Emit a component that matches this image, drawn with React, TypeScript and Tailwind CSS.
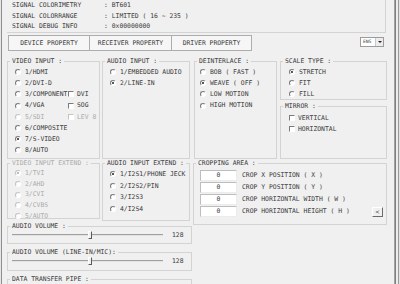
import React from "react";

type Item = { label: string; checked?: boolean; disabled?: boolean };

function Radio({ label, checked, disabled }: Item) {
  return (
    <span className="flex items-center gap-[4px]">
      <span
        className={`flex h-[6px] w-[6px] shrink-0 items-center justify-center rounded-full border border-b-white border-r-white bg-white ${
          disabled ? "border-[#c4c4c4]" : "border-[#7a7a7a]"
        }`}
      >
        {checked && <span className={`h-[2px] w-[2px] rounded-full ${disabled ? "bg-[#a8a8a8]" : "bg-[#1e1e1e]"}`} />}
      </span>
      <span className={disabled ? "text-[#ababab]" : ""}>{label}</span>
    </span>
  );
}

function Check({ label, disabled }: Item) {
  return (
    <span className="flex items-center gap-[3px]">
      <span
        className={`h-[6px] w-[6px] shrink-0 border border-b-white border-r-white bg-white ${
          disabled ? "border-[#c4c4c4]" : "border-[#7a7a7a]"
        }`}
      />
      <span className={disabled ? "text-[#ababab]" : ""}>{label}</span>
    </span>
  );
}

function Group({
  title,
  className = "",
  inner = "",
  disabled,
  children,
}: {
  title: string;
  className?: string;
  inner?: string;
  disabled?: boolean;
  children?: React.ReactNode;
}) {
  return (
    <fieldset className={`min-w-0 shrink-0 border border-[#d3d3d3] ${className}`}>
      <legend className={`ml-[2px] px-[2px] leading-[8px] whitespace-nowrap ${disabled ? "text-[#ababab]" : ""}`}>
        {title}
      </legend>
      <div className={inner}>{children}</div>
    </fieldset>
  );
}

function Slider({ value }: { value: number }) {
  return (
    <div className="flex h-[10px] items-center">
      <div className="relative ml-[4px] h-[2px] w-[151px] border-t border-[#a0a0a0] border-b-white bg-[#e2e2e2]">
        <div className="absolute left-[76px] top-[-4px] h-[8px] w-[4px] border border-white border-b-[#5a5a5a] border-r-[#5a5a5a] bg-[#f0f0f0]" />
      </div>
      <span className="ml-[9px]">{value}</span>
    </div>
  );
}

const signals = [
  ["SIGNAL COLORIMETRY", ": BT601"],
  ["SIGNAL COLORRANGE", ": LIMITED ( 16 ~ 235 )"],
  ["SIGNAL DEBUG INFO", ": 0x00000000"],
];

const tabs = [
  { label: "DEVICE PROPERTY", w: "w-[82px]" },
  { label: "RECEIVER PROPERTY", w: "w-[83px]" },
  { label: "DRIVER PROPERTY", w: "w-[81px]" },
];

const videoInputs: (Item & { extra?: Item })[] = [
  { label: "1/HDMI" },
  { label: "2/DVI-D" },
  { label: "3/COMPONENT", extra: { label: "DVI" } },
  { label: "4/VGA", extra: { label: "SOG" } },
  { label: "5/SDI", disabled: true, extra: { label: "LEV 8", disabled: true } },
  { label: "6/COMPOSITE" },
  { label: "7/S-VIDEO", checked: true },
  { label: "8/AUTO" },
];

const crops = [
  "CROP X POSITION ( X )",
  "CROP Y POSITION ( Y )",
  "CROP HORIZONTAL WIDTH ( W )",
  "CROP HORIZONTAL HEIGHT ( H )",
];

export default function App() {
  return (
    <div className="flex h-[284px] w-[400px] overflow-hidden bg-[#f0f0f0] font-['DejaVu_Sans_Mono',monospace] text-[6.4px] leading-none text-[#3a3a3a]">
      <div className="w-[1px] bg-[#e6e6e6]" />
      <div className="w-[1px] bg-[#8e8e8e]" />
      <div className="w-[5px]" />

      <div className="flex w-[380px] shrink-0 flex-col">
        {/* signal info */}
        <div className="h-[33px] w-[379px] shrink-0 border-b border-r border-[#d3d3d3] pl-[5px]">
          {signals.map(([k, v]) => (
            <div key={k} className="flex h-[10.5px] items-center">
              <span className="w-[92px]">{k}</span>
              <span>{v}</span>
            </div>
          ))}
        </div>

        {/* tabs */}
        <div className="mt-[2px] flex h-[16px] shrink-0 items-start pl-[1px]">
          {tabs.map((t, i) => (
            <div
              key={t.label}
              className={`flex h-[16px] ${t.w} items-center justify-center border border-[#adadad] bg-[#f6f6f6] ${i > 0 ? "-ml-[1px]" : ""}`}
            >
              {t.label}
            </div>
          ))}
          <div className="ml-auto mr-[3px] mt-[2px] flex h-[10px] w-[24px] border border-[#9c9c9c] bg-white">
            <span className="flex flex-1 items-center pl-[2px] text-[4.6px]">ENG</span>
            <span className="flex w-[8px] items-center justify-center border-l border-[#c8c8c8] bg-[#ececec]">
              <span className="h-0 w-0 border-x-[2px] border-t-[2px] border-x-transparent border-t-[#222]" />
            </span>
          </div>
        </div>

        {/* row 1 */}
        <div className="mt-[6px] flex h-[102px] shrink-0">
          <Group title="VIDEO INPUT :" className="h-[102px] w-[93px]" inner="pl-[7px] pt-[1.4px]">
            {videoInputs.map((v) => (
              <div key={v.label} className="flex h-[11.2px] items-center">
                <span className="w-[53px] shrink-0">
                  <Radio {...v} />
                </span>
                {v.extra && <Check {...v.extra} />}
              </div>
            ))}
          </Group>
          <Group title="AUDIO INPUT :" className="ml-[2px] h-[102px] w-[88px]" inner="pl-[7px] pt-[1.4px]">
            {[{ label: "1/EMBEDDED AUDIO" }, { label: "2/LINE-IN", checked: true }].map((v) => (
              <div key={v.label} className="flex h-[11.2px] items-center">
                <Radio {...v} />
              </div>
            ))}
          </Group>
          <Group title="DEINTERLACE :" className="ml-[4px] h-[102px] w-[83px]" inner="pl-[5px] pt-[1.4px]">
            {[
              { label: "BOB ( FAST )" },
              { label: "WEAVE ( OFF )", checked: true },
              { label: "LOW MOTION" },
              { label: "HIGH MOTION" },
            ].map((v) => (
              <div key={v.label} className="flex h-[11.2px] items-center">
                <Radio {...v} />
              </div>
            ))}
          </Group>
          <div className="ml-[3px] flex w-[107px] flex-col">
            <Group title="SCALE TYPE :" className="h-[43px] w-[107px]" inner="pl-[8px] pt-[1.4px]">
              {[{ label: "STRETCH", checked: true }, { label: "FIT" }, { label: "FILL" }].map((v) => (
                <div key={v.label} className="flex h-[11.2px] items-center">
                  <Radio {...v} />
                </div>
              ))}
            </Group>
            <Group title="MIRROR :" className="mt-[2px] h-[57px] w-[107px]" inner="pl-[8px] pt-[2.4px]">
              {["VERTICAL", "HORIZONTAL"].map((l) => (
                <div key={l} className="flex h-[11.2px] items-center">
                  <Check label={l} />
                </div>
              ))}
            </Group>
          </div>
        </div>

        {/* row 2 */}
        <div className="flex shrink-0">
          <div className="flex w-[185px] flex-col">
            <div className="flex">
              <Group title="VIDEO INPUT EXTEND :" disabled className="h-[60px] w-[93px]" inner="pl-[7px] pt-[0.6px]">
                {["1/TVI", "2/AHD", "3/CVI", "4/CVBS", "5/AUTO"].map((l, i) => (
                  <div key={l} className="flex h-[10.8px] items-center">
                    <Radio label={l} checked={i === 0} disabled />
                  </div>
                ))}
              </Group>
              <Group title="AUDIO INPUT EXTEND :" className="ml-[2px] h-[62px] w-[88px]" inner="pl-[7px] pt-[1.2px]">
                {["1/I2S1/PHONE JECK", "2/I2S2/PIN", "3/I2S3", "4/I2S4"].map((l, i) => (
                  <div key={l} className="flex h-[11.7px] items-center">
                    <Radio label={l} checked={i === 0} />
                  </div>
                ))}
              </Group>
            </div>
            <Group title="AUDIO VOLUME :" className="mt-[1px] h-[22px] w-[185px]">
              <Slider value={128} />
            </Group>
            <Group title="AUDIO VOLUME (LINE-IN/MIC):" className="mt-[4px] h-[23px] w-[185px]">
              <Slider value={128} />
            </Group>
            <Group title="DATA TRANSFER PIPE :" className="mt-[4px] h-[20px] w-[185px]" />
          </div>

          <Group title="CROPPING AREA :" className="ml-[1px] h-[66px] w-[194px]" inner="pr-[3px] pt-[2px]">
            {crops.map((c, i) => (
              <div key={c} className="flex h-[12px] items-center">
                <span className="ml-[6px] flex h-[11px] w-[37px] items-center justify-center border border-[#bdbdbd] border-b-[#ececec] border-r-[#ececec] bg-white">
                  0
                </span>
                <span className="ml-[5px]">{c}</span>
                {i === crops.length - 1 && (
                  <span className="ml-auto mt-[2px] flex h-[10px] w-[11px] items-center justify-center border border-white border-b-[#6a6a6a] border-r-[#6a6a6a] bg-[#f0f0f0]">
                    &lt;
                  </span>
                )}
              </div>
            ))}
          </Group>
        </div>
      </div>

      {/* window edge */}
      <div className="flex flex-1">
        <div className="w-[7px]" />
        <div className="w-[1px] bg-[#a4a4a4]" />
        <div className="w-[1px] bg-[#7e7e7e]" />
        <div className="w-[2px] bg-[#ececec]" />
        <div className="w-[1px] bg-[#9a9a9a]" />
        <div className="w-[1px] bg-[#e2e2e2]" />
      </div>
    </div>
  );
}
